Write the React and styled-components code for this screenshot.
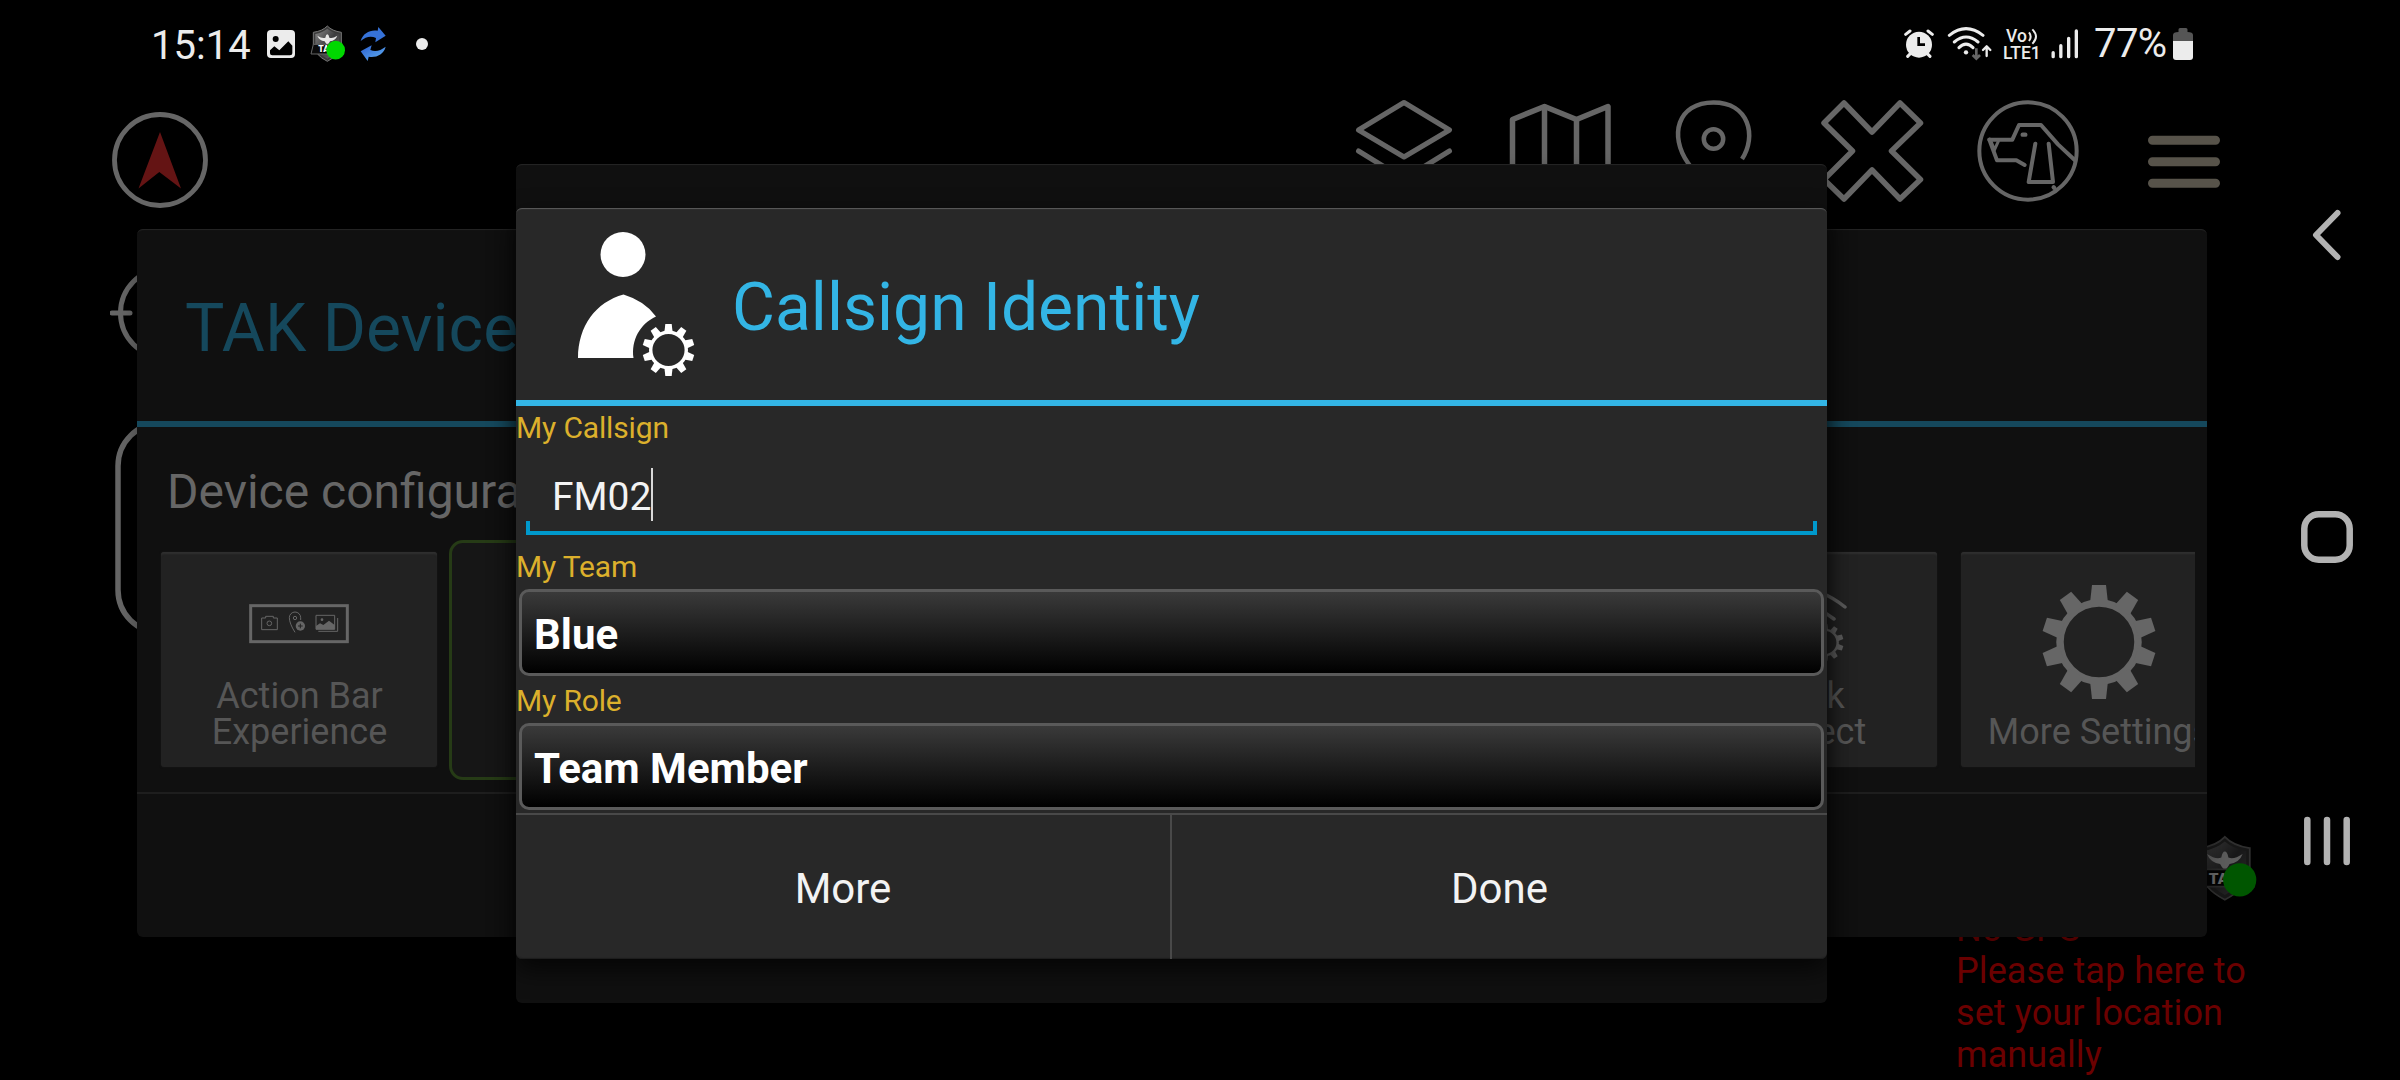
import React from "react";
import styled, { createGlobalStyle } from "styled-components";

const GlobalStyle = createGlobalStyle`
  * { box-sizing: border-box; }
  html, body { margin: 0; background: #000; }
  body { font-family: Roboto, "Noto Sans", sans-serif; }
  svg { display: block; flex: none; }
`;

/* ---------- shell ---------- */

const Screen = styled.div`
  position: relative;
  display: flex;
  width: 2400px;
  height: 1080px;
  overflow: hidden;
  background: #000;
`;

const Main = styled.main`
  display: flex;
  flex-direction: column;
  width: 2254px;
`;

const NavRail = styled.nav`
  display: flex;
  flex-direction: column;
  width: 146px;
  padding-top: 84px;
`;

const NavButton = styled.div`
  display: flex;
  align-items: center;
  justify-content: center;
  height: 302px;
  padding-top: ${(p) => p.$drop || 0}px;
`;

/* ---------- status bar ---------- */

const StatusBar = styled.header`
  display: flex;
  align-items: center;
  justify-content: space-between;
  height: 88px;
  padding: 0 61px 0 151px;
  color: #ececec;
`;

const StatusGroup = styled.div`
  display: flex;
  align-items: center;
  gap: ${(p) => p.$gap}px;
`;

const StatusIcon = styled.div`
  margin-left: ${(p) => p.$left}px;
`;

const Clock = styled.span`
  width: 101px;
  padding-top: 4px;
  font-size: 40px;
  line-height: 48px;
`;

const Percent = styled.span`
  width: 73px;
  margin-left: 7px;
  font-size: 40px;
  line-height: 48px;
  letter-spacing: -0.6px;
  white-space: nowrap;
`;

const Volte = styled.div`
  width: 39px;
  margin: 1px 0 0 2px;
  font-size: 17.5px;
  font-weight: 500;
  line-height: 17px;
`;

const VolteTop = styled.div`
  display: flex;
  align-items: center;
  padding-left: 3px;
`;

/* ---------- map tool bar and widgets ---------- */

const Toolbar = styled.div`
  display: flex;
  justify-content: space-between;
  height: 140px;
  padding: 11px 18px 0 108px;
`;

const ToolGroup = styled.div`
  display: flex;
  gap: 52px;
`;

const MapBody = styled.div`
  display: flex;
  flex: 1;
  justify-content: space-between;
`;

const SideControls = styled.div`
  display: flex;
  flex-direction: column;
  gap: 58px;
  padding: 36px 0 0 110px;
`;

const InfoColumn = styled.div`
  display: flex;
  flex-direction: column;
  justify-content: flex-end;
  width: 298px;
  padding-bottom: 4px;
`;

const BadgeSlot = styled.div`
  padding: 0 0 7px 238px;
`;

const LocationNote = styled.div`
  color: #6b0000;
  font-size: 36px;
  line-height: 42px;
  letter-spacing: 0.1px;
  white-space: nowrap;
`;

/* ---------- dialogs ---------- */

const Panel = styled.section`
  position: absolute;
  left: ${(p) => p.$x}px;
  top: ${(p) => p.$y}px;
  display: flex;
  flex-direction: column;
  width: ${(p) => p.$w}px;
  height: ${(p) => p.$h}px;
  border-radius: 6px;
  background: ${(p) => (p.$active ? "#282828" : "#101010")};
  box-shadow: ${(p) =>
    p.$active
      ? "0 10px 26px rgba(0,0,0,0.75), inset 0 2px 1px -1px #5c5c5c, inset 0 -2px 1px -1px #1c1c1c"
      : "0 8px 20px rgba(0,0,0,0.35), inset 0 2px 1px -1px #262626"};
`;

const DialogHeader = styled.div`
  display: flex;
  align-items: center;
  height: 198px;
  padding: ${(p) => (p.$active ? "7px 0 0 60px" : "7px 0 0 48px")};
  border-bottom: 6px solid ${(p) => (p.$active ? "#33b5e5" : "#15485c")};
  color: ${(p) => (p.$active ? "#33b5e5" : "#15485c")};
  font-size: 66px;
  white-space: nowrap;
`;

const HeaderIcon = styled.div`
  width: 156px;
  margin-top: -7px;
`;

const Subtitle = styled.div`
  height: 113px;
  padding-left: 30px;
  color: #666;
  font-size: 48px;
  line-height: 129px;
`;

const CardRow = styled.div`
  display: flex;
  height: 240px;
  margin: 0 12px 12px;
  overflow: hidden;
`;

const CardSlot = styled.div`
  flex: none;
  display: flex;
  width: 300px;
  padding: ${(p) => (p.$focused ? 9 : 12)}px;
  border: ${(p) => (p.$focused ? "3px solid #263b16" : "none")};
  border-radius: 14px;
  background: ${(p) => (p.$focused ? "#161616" : "transparent")};
`;

const Card = styled.div`
  display: flex;
  flex: 1;
  flex-direction: column;
  align-items: center;
  justify-content: flex-end;
  margin-bottom: 1px;
  padding-bottom: 17px;
  border-radius: 3px;
  background: ${(p) => (p.$plain ? "transparent" : "#222")};
  box-shadow: ${(p) => (p.$plain ? "none" : "inset 0 3px 2px -1px #303030, 0 0 2px #1c1c1c")};
`;

const CardIcon = styled.div`
  margin-bottom: ${(p) => p.$gap}px;
`;

const CardLabel = styled.div`
  padding-left: 1px;
  color: #565656;
  font-size: 36px;
  line-height: 36px;
  text-align: center;
  white-space: nowrap;
`;

const DialogFooter = styled.div`
  display: flex;
  flex: 1;
  border-top: 2px solid ${(p) => (p.$active ? "#494949" : "#1e1e1e")};
`;

const FooterButton = styled.div`
  display: flex;
  flex: 1;
  align-items: center;
  justify-content: center;
  padding-top: 3px;
  color: #f3f3f3;
  font-size: 42px;

  & + & {
    flex: 0 0 657px;
    border-left: 2px solid #494949;
  }
`;

const Form = styled.div`
  height: 407px;
  padding-top: 4px;
`;

const Label = styled.div`
  margin-top: ${(p) => p.$top || 0}px;
  color: #dcb02c;
  font-size: 30px;
  letter-spacing: -0.15px;
  line-height: 36px;
`;

const Field = styled.div`
  display: flex;
  align-items: center;
  height: 75px;
  padding: 26px 0 0 36px;
  color: #f3f3f3;
  font-size: 39px;
`;

const Cursor = styled.span`
  align-self: flex-end;
  width: 2px;
  height: 53px;
  background: #d8d8d8;
`;

const FieldLine = styled.div`
  height: 14px;
  margin: 0 10px;
  border: solid #0099cc;
  border-width: 0 4px 4px;
`;

const Spinner = styled.div`
  display: flex;
  align-items: center;
  height: 87px;
  margin: 4px 3px 0;
  padding: 4px 0 0 12px;
  border: 3px solid #5a5a5a;
  border-radius: 10px;
  background: linear-gradient(#3a3a3a, #000) padding-box;
  color: #fff;
  font-size: 42px;
  font-weight: 700;
`;

/* ---------- drawings ---------- */

const Stroke = styled.g.attrs({ fill: "none", strokeLinecap: "round", strokeLinejoin: "round" })``;

function ToolIcon({ box, color = "#666", width = 5, children }) {
  return (
    <svg width="104" height="104" viewBox={box}>
      <Stroke stroke={color} strokeWidth={width}>{children}</Stroke>
    </svg>
  );
}

function TakBadge({ scale = 1, opacity = 1 }) {
  return (
    <svg width={(106 / 3) * scale} height={(112 / 3) * scale} viewBox="658 76 106 112" opacity={opacity}>
      <defs>
        <linearGradient id="steel" x1="0" y1="0" x2="1" y2="1">
          <stop offset="0" stopColor="#8a8a8a" />
          <stop offset="0.5" stopColor="#3c3c3e" />
          <stop offset="1" stopColor="#6c6c6c" />
        </linearGradient>
      </defs>
      <path d="M710 79 Q724 94 752 98 V135 Q748 166 710 185 Q672 166 668 135 V98 Q696 94 710 79Z" fill="#3a3a3a" stroke="#777" strokeWidth="3" />
      <path d="M710 87 Q724 99 746 103 V132 Q742 160 710 177 Q678 160 674 132 V103 Q696 99 710 87Z" fill="url(#steel)" />
      <path d="M680 108 Q695 118 704 114 Q706 104 710 104 Q714 104 716 114 Q725 118 740 108 Q735 122 718 125 L715 130 L710 136 L705 130 L702 125 Q685 122 680 108Z" fill="#e6e6e6" />
      <path d="M668 134 H752 L759 163 H661Z" fill="#090909" stroke="#666" strokeWidth="3" />
      <text x="683" y="158" fontFamily="Roboto, sans-serif" fontWeight="900" fontSize="26" fill="#fff">TAK</text>
      <circle cx="735" cy="151.500" r="28" fill="#00d800" />
    </svg>
  );
}

const TEETH = Array.from({ length: 10 }, (_, i) => i * 36);

function GearShape({ cx, cy, r, color }) {
  const s = r / 57;
  return (
    <g transform={`translate(${cx} ${cy}) scale(${s})`}>
      <circle r="39" fill="none" stroke={color} strokeWidth="7.500" />
      {TEETH.map((a) => (
        <path key={a} d="M-7 -57 H7 L9 -39 H-9Z" fill={color} transform={`rotate(${a})`} />
      ))}
    </g>
  );
}

function PersonIcon() {
  return (
    <svg width="122" height="146" viewBox="576 231 122 146">
      <circle cx="623" cy="254.500" r="22.500" fill="#fff" />
      <path d="M578 358 C578 326 596 302 623.500 294.500 Q645 301 656 316.500 C640 324 631 340 633.500 358Z" fill="#fff" />
      <GearShape cx={668.5} cy={350} r={26} color="#fff" />
    </svg>
  );
}

function ActionBarIcon() {
  return (
    <svg width="100" height="40" viewBox="447 222 300 120">
      <rect x="452" y="227" width="290" height="108" fill="none" stroke="#666" strokeWidth="9" />
      <g fill="none" stroke="#666" strokeWidth="3">
        <path d="M485 264 H497 V259 H520 V264 H532 V299 H485Z" />
        <circle cx="508" cy="280" r="7" />
        <path d="M585 307 Q568 280 568 263 A17 17 0 0 1 602 263 V270" />
        <circle cx="585" cy="264" r="5" />
        <path d="M648 256 H704 V298 H648Z M713 264 V304 H655" />
      </g>
      <circle cx="601" cy="288" r="14" fill="#666" />
      <path d="M601 281 V295 M594 288 H608" stroke="#222" strokeWidth="3" />
      <circle cx="666" cy="269" r="4" fill="#666" />
      <path d="M648 298 V288 L660 280 L670 285 L687 272 L704 285 V298Z" fill="#666" />
    </svg>
  );
}

function QuickConnectIcon() {
  return (
    <svg width="100" height="80" viewBox="1749 583 100 80">
      <Stroke stroke="#5c5c5c" strokeWidth="3.500">
        <path d="M1752 607 Q1799 570 1845 607" />
        <path d="M1766 619 Q1799 592 1834 619" />
        <path d="M1779 632 Q1799 615 1812 627" />
      </Stroke>
      <GearShape cx={1825} cy={642.5} r={18.5} color="#5c5c5c" />
    </svg>
  );
}

function Toolset() {
  return (
    <ToolGroup>
      <ToolIcon box="1352 99 104 104">
        <path d="M1404 102.500 L1449.500 130 L1404 157 L1358.500 130Z" />
        <path d="M1358.500 151 L1404 179 L1449.500 151" />
      </ToolIcon>
      <ToolIcon box="1508 99 104 104" width={5.5}>
        <path d="M1512.500 119.500 L1544.500 106.500 L1576.500 119.500 L1608 106.500 V185 L1576.500 198 L1544.500 185 L1512.500 198Z" />
        <path d="M1544.500 107 V185 M1576.500 120 V198" />
      </ToolIcon>
      <ToolIcon box="1664 99 104 104" width={4.5}>
        <path strokeLinecap="butt" d="M1713.500 199 L1688 163 C1669 136 1677 102.500 1713.500 102.500 C1749 102.500 1757 136 1742 159" />
        <circle cx="1713.500" cy="139" r="9.700" />
      </ToolIcon>
      <ToolIcon box="1820 99 104 104" width={5.5}>
        <path d="M1844 103 L1872 132 L1900 103 L1920.500 123 L1891.500 151 L1920.500 179.500 L1900 199 L1872 170 L1844 199 L1824 179.500 L1852.500 151 L1824 123Z" />
      </ToolIcon>
      <ToolIcon box="588 297 312 312" width={12}>
        <circle cx="744" cy="453" r="146" />
        <path d="M628 419 H697 L717 375 H783 L834 433 L884 480" />
        <path d="M628 419 L651 481 H709 L734 495" />
        <path d="M634 426 L643 450 L655 424" strokeWidth="9" />
        <path d="M766 431 L746 546 H819 L806 431" />
        <path d="M728 404 H736" strokeWidth="13" />
        <path d="M821 562 L823 564" strokeWidth="13" />
      </ToolIcon>
      <ToolIcon box="2132 99 104 104" color="#57534a" width={9}>
        <path d="M2152.500 140.300 H2215.500 M2152.500 161.700 H2215.500 M2152.500 183.300 H2215.500" />
      </ToolIcon>
    </ToolGroup>
  );
}

function Status() {
  return (
    <StatusBar>
      <StatusGroup $gap={15}>
        <Clock>15:14</Clock>
        <svg width="28" height="28" viewBox="531 90 84 84">
          <rect x="531" y="90" width="84" height="84" rx="12" fill="#ececec" />
          <circle cx="557" cy="117" r="9" fill="#000" />
          <path d="M540 151 L553 139 L568 151 L595 124 L607 137 V160 Q607 166 600 166 H547 Q540 166 540 160Z" fill="#000" />
        </svg>
        <TakBadge />
        <StatusIcon $left={0}>
          <svg width="26" height="36" viewBox="811 78 78 108">
            <defs>
              <linearGradient id="sync" x1="0" y1="0" x2="1" y2="1">
                <stop offset="0" stopColor="#2b5fd0" />
                <stop offset="1" stopColor="#62b2f2" />
              </linearGradient>
            </defs>
            <path d="M813 123 C820 98 843 88 864 92 L866 81 L888 107 L857 127 L859 114 C844 107 828 110 813 123Z" fill="#3672d8" />
            <path d="M888 140 C882 164 858 174 837 170 L834 183 L813 154 L846 136 L842 150 C858 156 872 152 888 140Z" fill="url(#sync)" />
          </svg>
        </StatusIcon>
        <StatusIcon $left={15}>
          <svg width="12" height="12" viewBox="0 0 12 12">
            <circle cx="6" cy="6" r="6" fill="#ececec" />
          </svg>
        </StatusIcon>
      </StatusGroup>
      <StatusGroup $gap={9}>
        <svg width="30" height="30" viewBox="371 88 90 90">
          <circle cx="416" cy="135" r="39" fill="#ececec" />
          <Stroke stroke="#ececec" strokeWidth="9">
            <path d="M376 104 L389 94 M456 104 L443 94 M382 170 L390 162 M449 170 L441 162" />
          </Stroke>
          <path d="M415 112 V135 H434" fill="none" stroke="#000" strokeWidth="8" />
        </svg>
        <StatusIcon $left={4}>
          <svg width="45" height="36" viewBox="501 78 135 108">
            <Stroke stroke="#ececec" strokeWidth="9">
              <path d="M508 106 Q558 66 609 106 M523 126 Q558 96 594 126 M537 143 Q558 122 579 143" />
              <path d="M620 168 V140 M609 150 L620 139 L631 150" strokeWidth="7" />
            </Stroke>
            <circle cx="558" cy="157" r="6.500" fill="#ececec" />
            <path d="M589 145 V174 M578 165 L589 176 L600 165" fill="none" stroke="#666" strokeWidth="8" />
          </svg>
        </StatusIcon>
        <Volte>
          <VolteTop>
            Vo
            <svg width="12" height="17" viewBox="744 84 36 51">
              <path d="M750 97 Q760 110 750 123 M760 88 Q782 110 760 131" fill="none" stroke="#ececec" strokeWidth="6" />
            </svg>
          </VolteTop>
          LTE1
        </Volte>
        <svg width="27" height="30" viewBox="815 86 81 90">
          <Stroke stroke="#ececec" strokeWidth="10">
            <path d="M821.500 157 V169 M844.500 136 V169 M868 114 V169 M891 92 V169" />
          </Stroke>
        </svg>
        <Percent>77%</Percent>
        <StatusIcon $left={-3}>
          <svg width="20" height="32" viewBox="0 0 20 32">
            <path d="M5.500 4 V1.500 Q5.500 0 7 0 H13 Q14.500 0 14.500 1.500 V4 Q20 4 20 7 V13 H0 V7 Q0 4 5.500 4Z" fill="#555" />
            <path d="M0 13 H20 V29 Q20 32 17 32 H3 Q0 32 0 29Z" fill="#ececec" />
          </svg>
        </StatusIcon>
      </StatusGroup>
    </StatusBar>
  );
}

function DeviceDialog() {
  return (
    <Panel $x={137} $y={229} $w={2070} $h={708}>
      <DialogHeader>TAK Device</DialogHeader>
      <Subtitle>Device configurations</Subtitle>
      <CardRow>
        <CardSlot>
          <Card>
            <CardIcon $gap={34}><ActionBarIcon /></CardIcon>
            <CardLabel>Action Bar<br />Experience</CardLabel>
          </Card>
        </CardSlot>
        <CardSlot $focused><Card $plain /></CardSlot>
        <CardSlot><Card /></CardSlot>
        <CardSlot><Card /></CardSlot>
        <CardSlot><Card /></CardSlot>
        <CardSlot>
          <Card>
            <CardIcon $gap={15}><QuickConnectIcon /></CardIcon>
            <CardLabel>Quick<br />Connect</CardLabel>
          </Card>
        </CardSlot>
        <CardSlot>
          <Card>
            <CardIcon $gap={15}>
              <svg width="114" height="114" viewBox="-57 -57 114 114">
                <GearShape cx={0} cy={0} r={57} color="#666" />
              </svg>
            </CardIcon>
            <CardLabel>More Settings</CardLabel>
          </Card>
        </CardSlot>
      </CardRow>
      <DialogFooter />
    </Panel>
  );
}

function IdentityDialog() {
  return (
    <Panel $active $x={516} $y={208} $w={1311} $h={751}>
      <DialogHeader $active>
        <HeaderIcon><PersonIcon /></HeaderIcon>
        Callsign Identity
      </DialogHeader>
      <Form>
        <Label>My Callsign</Label>
        <Field>FM02<Cursor /></Field>
        <FieldLine />
        <Label $top={14}>My Team</Label>
        <Spinner>Blue</Spinner>
        <Label $top={7}>My Role</Label>
        <Spinner>Team Member</Spinner>
      </Form>
      <DialogFooter $active>
        <FooterButton>More</FooterButton>
        <FooterButton>Done</FooterButton>
      </DialogFooter>
    </Panel>
  );
}

export default function App() {
  return (
    <>
      <GlobalStyle />
      <Screen>
        <Main>
          <Status />
          <Toolbar>
            <svg width="104" height="124" viewBox="108 99 104 124">
              <circle cx="160" cy="160" r="45.500" fill="none" stroke="#666" strokeWidth="4.800" />
              <path d="M160 132 L181 188.500 L159.300 172 L138.500 188.500Z" fill="#641414" />
            </svg>
            <Toolset />
          </Toolbar>
          <MapBody>
            <SideControls>
              <svg width="106" height="98" viewBox="110 264 106 98">
                <Stroke stroke="#666" strokeWidth="5">
                  <circle cx="165" cy="313" r="44.500" />
                  <path d="M112 313 H130 M200 313 H213" />
                </Stroke>
              </svg>
              <svg width="106" height="220" viewBox="110 420 106 220">
                <rect x="118" y="423" width="92" height="210" rx="43" fill="none" stroke="#666" strokeWidth="5.500" />
              </svg>
            </SideControls>
            <InfoColumn>
              <BadgeSlot><TakBadge scale={1.78} opacity={0.4} /></BadgeSlot>
              <LocationNote>
                No GPS<br />Please tap here to<br />set your location<br />manually
              </LocationNote>
            </InfoColumn>
          </MapBody>
        </Main>
        <NavRail>
          <NavButton>
            <svg width="30" height="54" viewBox="2312 208 30 54">
              <Stroke stroke="#b2b2b2" strokeWidth="6"><path d="M2337.500 213 L2316 235 L2337.500 257" /></Stroke>
            </svg>
          </NavButton>
          <NavButton>
            <svg width="54" height="54" viewBox="0 0 54 54">
              <rect x="4.300" y="4.300" width="45.400" height="45.400" rx="14.500" fill="none" stroke="#b2b2b2" strokeWidth="6.500" />
            </svg>
          </NavButton>
          <NavButton $drop={3}>
            <svg width="48" height="50" viewBox="0 0 48 50">
              <Stroke stroke="#b2b2b2" strokeWidth="6.500"><path d="M4.300 4 V46 M24 4 V46 M43.700 4 V46" /></Stroke>
            </svg>
          </NavButton>
        </NavRail>
        <DeviceDialog />
        <Panel $x={516} $y={164} $w={1311} $h={839} />
        <IdentityDialog />
      </Screen>
    </>
  );
}
